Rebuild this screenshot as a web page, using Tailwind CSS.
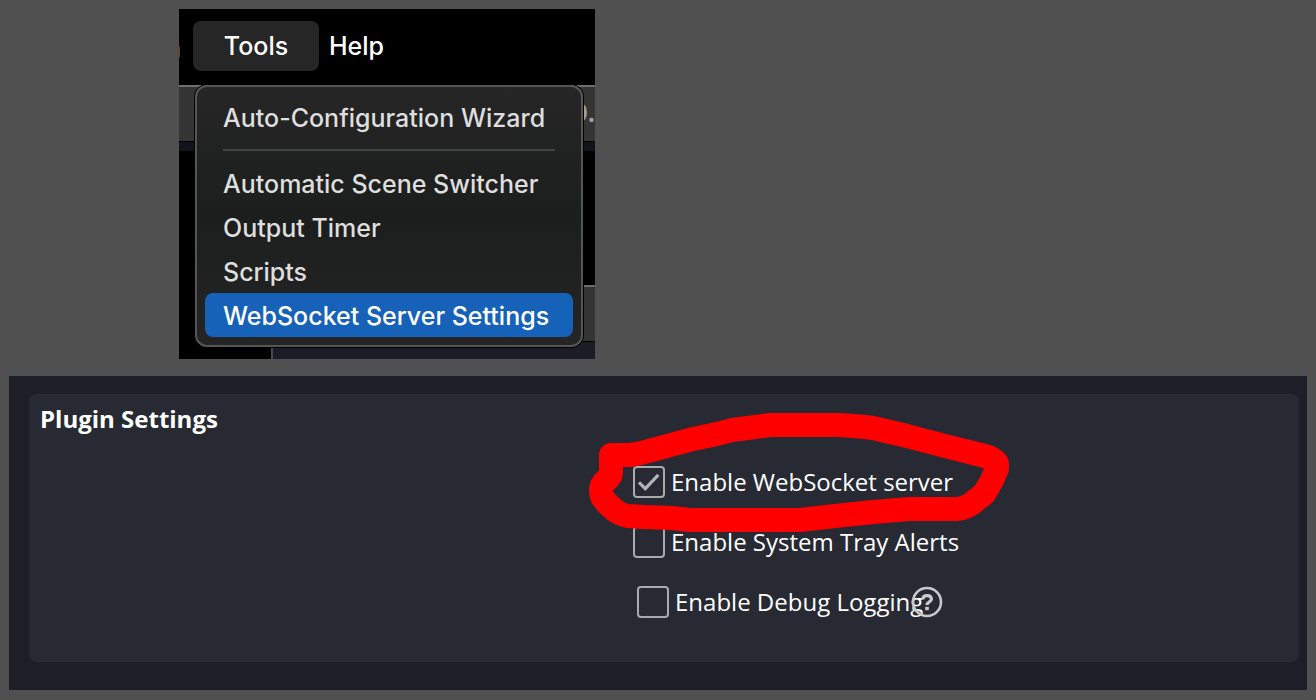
<!DOCTYPE html>
<html lang="en">
<head>
<meta charset="utf-8">
<title>WebSocket Server Settings</title>
<script src="https://cdn.jsdelivr.net/npm/@tailwindcss/browser@4"></script>
</head>
<body class="min-h-screen bg-[#505050] px-[9px] pt-[9px] pb-[10px] overflow-x-hidden">

<!-- Menu bar with the open Tools menu -->
<section class="relative isolate ml-[170px] w-[416px] h-[350px] overflow-hidden bg-black font-[Inter,sans-serif] text-[25px] font-medium text-white">
  <!-- Window behind the menu -->
  <div class="absolute inset-x-0 top-[76px] -z-10 h-14 border-t-2 border-[#706d70] bg-[#353535]" aria-hidden="true">
    <span class="absolute left-[392px] top-1 text-[#a0a0a0] font-bold leading-[44px]">0.</span>
  </div>
  <div class="absolute inset-x-0 top-[132px] -z-10 h-[10px] border-t border-black bg-[#12141b]" aria-hidden="true"></div>
  <div class="absolute right-0 top-[276px] -z-10 h-[57px] w-8 border-t-2 border-b border-t-[#6a6a6a] border-b-black bg-[#353535]" aria-hidden="true"></div>
  <div class="absolute right-0 bottom-0 -z-10 h-[17px] w-[324px] border-l-2 border-[#4a4a4d] bg-[#1b1d26]" aria-hidden="true"></div>
  <span class="absolute -left-[13px] top-[14px] leading-[50px] text-[#c8c8c8]" aria-hidden="true">n</span>

  <nav class="flex h-[76px] items-center pl-[14px] pb-[2px]" aria-label="Menu bar">
    <button class="h-[50px] w-[126px] rounded-lg bg-[#262626] pt-[2px]">Tools</button>
    <button class="ml-[10px] h-[50px] pt-[2px]">Help</button>
  </nav>

  <div class="mx-4 w-[388px] rounded-xl border-2 border-[#555555] bg-gradient-to-b from-[#262626] via-[#1c1d1d] to-[#252525] p-2 text-[#dedede] shadow-[0_0_0_1px_#000]" role="menu">
    <button role="menuitem" class="block h-11 w-full px-[18px] pt-1 text-left whitespace-nowrap">Auto-Configuration Wizard</button>
    <hr class="mx-[18px] my-[10px] border-t-2 border-[#434343]">
    <button role="menuitem" class="block h-11 w-full px-[18px] pt-1 text-left whitespace-nowrap">Automatic Scene Switcher</button>
    <button role="menuitem" class="block h-11 w-full px-[18px] pt-1 text-left">Output Timer</button>
    <button role="menuitem" class="block h-11 w-full px-[18px] pt-1 text-left">Scripts</button>
    <button role="menuitem" class="block h-11 w-full rounded-lg bg-[#1662b8] px-[18px] pt-1 text-left whitespace-nowrap text-white">WebSocket Server Settings</button>
  </div>
</section>

<!-- Plugin settings -->
<section class="mt-[17px] bg-[#1d1f28] pt-[18px] pr-2 pb-7 pl-5 font-['Open_Sans',sans-serif] text-2xl text-white">
  <div class="rounded-lg bg-[#272a33] pb-11">
    <h2 class="px-[11px] pt-2 leading-[34px] font-bold">Plugin Settings</h2>
    <form class="grid grid-cols-[604fr_666fr] pt-[30px]">
      <div class="relative col-start-2 flex flex-col gap-7">
        <div class="flex h-8 items-center gap-1.5">
          <span class="relative flex">
            <input id="ws" type="checkbox" checked class="size-8 appearance-none rounded-sm border-2 border-[#a9a9ae]">
            <svg class="pointer-events-none absolute inset-0 size-8" viewBox="0 0 32 32" fill="none" stroke="#b3b3b7" stroke-width="3.2" aria-hidden="true"><path d="M6 16.3 12.3 22.7 25.3 8.8"/></svg>
          </span>
          <label for="ws" class="whitespace-nowrap">Enable WebSocket server</label>
        </div>
        <div class="flex h-8 items-center gap-1.5">
          <input id="tray" type="checkbox" class="size-8 appearance-none rounded-sm border-2 border-[#a9a9ae]">
          <label for="tray" class="whitespace-nowrap">Enable System Tray Alerts</label>
        </div>
        <div class="flex h-8 items-center gap-1.5 pl-1">
          <input id="debug" type="checkbox" class="size-8 appearance-none rounded-sm border-2 border-[#a9a9ae]">
          <label for="debug" class="whitespace-nowrap">Enable Debug Logging</label>
          <button type="button" aria-label="Help" class="-ml-[18px]">
            <svg class="size-8" viewBox="0 0 32 32" fill="none" stroke="#c9c9cb" aria-hidden="true">
              <circle cx="16" cy="16" r="14" stroke-width="2.6"/>
              <path d="M11.8 13.4C11.8 10.8 13.4 9.6 16 9.6s4.4 1.4 4.4 3.6c0 2.6-4.4 2.8-4.4 5.8" stroke-width="3.2"/>
              <path d="M16 20.8v3.4" stroke-width="3.6"/>
            </svg>
          </button>
        </div>
        <!-- Hand-drawn ring around the first option -->
        <svg class="pointer-events-none absolute -top-[66px] -left-[53px] h-[140px] w-[450px]" viewBox="580 400 450 140" fill="none" stroke="#ff0000" stroke-width="24" stroke-linejoin="round" stroke-linecap="round" aria-hidden="true">
          <path d="M611 455H631L641 453 693 439 717 434 732 430 770 425H837Q858 426 873 428L907 436 945 446 985 456Q997 460 997 465V469L991 482 984 494 976 500Q968 508 957 509H910L873 512 835 516 800 520H690L672 518 644 517 628 516Q618 514 611 507C602 499 601 495 601 490 601 480 611 480 611 473Z"/>
        </svg>
      </div>
    </form>
  </div>
</section>
</body>
</html>
